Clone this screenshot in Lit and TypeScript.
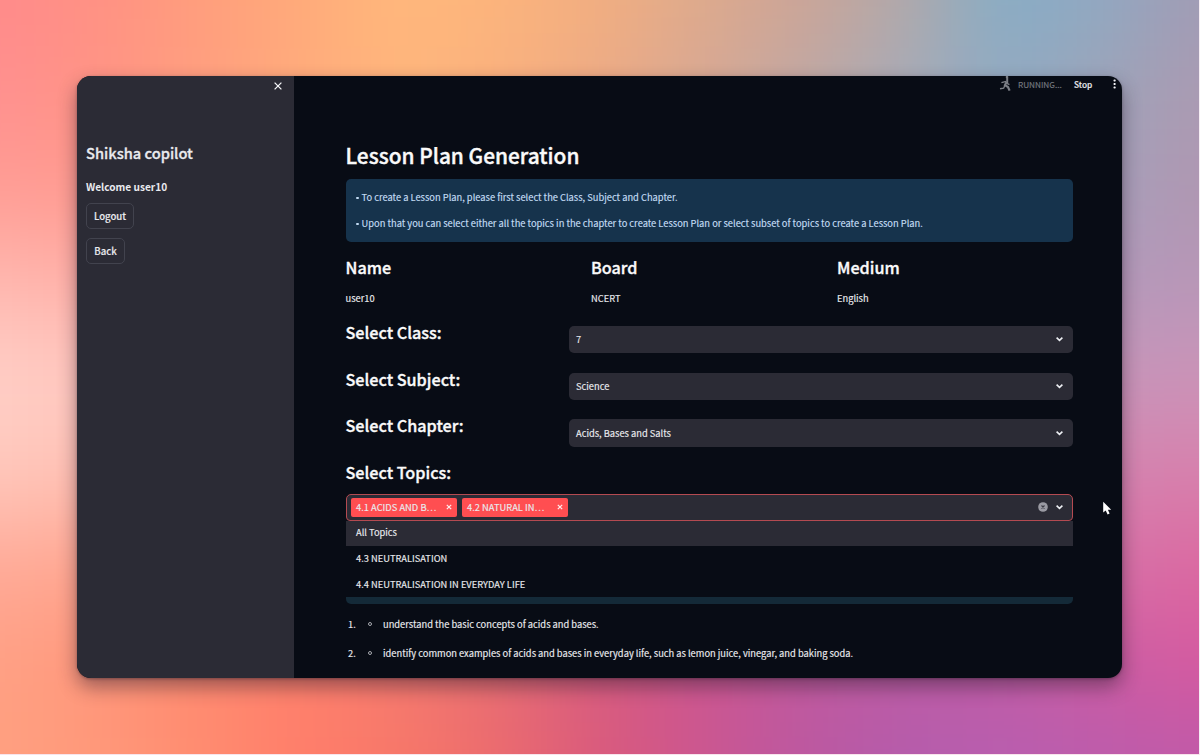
import { LitElement, html, css, svg } from "lit";
import { customElement } from "lit/decorators.js";

const COLS = 13;
const MESH: string[][] = [
  ["#ff8a8a","#ff9184","#ff9e7c","#ffaa7a","#ffb87c","#fcb47c","#f2ae80","#deaa8c","#cda496","#b3a8a8","#86adc6","#90a9c2","#a19bb4"],
  ["#ff9090","#ff9484","#ff9e80","#ffab7c","#ffb67c","#fab07e","#ecaa86","#d8a894","#c0a8a4","#a8abb8","#92aac2","#9da4b8","#ac9ab2"],
  ["#ff9c94","#ff9a90","#888","#888","#888","#888","#888","#888","#888","#888","#888","#a6a0bc","#b096b0"],
  ["#ffb8b0","#ffb0a8","#888","#888","#888","#888","#888","#888","#888","#888","#888","#b39aba","#b896b8"],
  ["#ffd0c8","#ffc8c0","#888","#888","#888","#888","#888","#888","#888","#888","#888","#c695ba","#cc94b8"],
  ["#ffc8bc","#ffc0b4","#888","#888","#888","#888","#888","#888","#888","#888","#888","#d484b0","#d880ac"],
  ["#ffaa98","#ffa690","#888","#888","#888","#888","#888","#888","#888","#888","#888","#d872a8","#dc68a0"],
  ["#ffa084","#ff967a","#ff8a70","#ff806c","#f47a70","#e66e74","#d65c80","#cc5690","#c05a9e","#be5ca4","#c05ca4","#cc5ca2","#d65aa0"],
  ["#ffa080","#ff987a","#ff8c70","#ff7e6a","#f87868","#ec6a6e","#da5a7c","#cc5690","#bc58a0","#b45cac","#b85eb0","#bc5cac","#c05aa8"],
];

@customElement("app-root")
export class AppRoot extends LitElement {
  static styles = css`
    :host { display: block; width: 1200px; height: 755px; position: relative; overflow: hidden;
      font-family: "Noto Sans CJK SC", "Noto Sans", sans-serif; color: #e9eaee; -webkit-text-stroke: .15px currentColor; }
    * { box-sizing: border-box; }
    .mesh { position: absolute; inset: 0; width: 1200px; height: 755px; }
    .stage { position: relative; height: 755px; padding: 76px 77px 76px 77px; border-right: 1px solid #f6eef4; border-bottom: 1px solid #f8e4ec; }
    .window { height: 602px; width: 1045px; display: flex; border-radius: 14px; overflow: hidden; background: #080c15;
      box-shadow: 0 9px 19px rgba(45,30,45,.48), 0 1px 3px rgba(30,20,30,.35); }
    .side { width: 217px; background: #2b2b35; padding: 0 9px; display: flex; flex-direction: column; align-items: flex-start; flex: none; }
    .close { align-self: flex-end; margin: 5px 2px 0 0; width: 10px; height: 10px; display: block; }
    .brand { margin-top: 51.4px; height: 22px; line-height: 22px; font-size: 14.65px; font-weight: 500; white-space: nowrap; -webkit-text-stroke-width: .3px; }
    .welcome { margin-top: 13.6px; height: 18px; line-height: 17px; font-size: 10.1px; font-weight: 700; white-space: nowrap; -webkit-text-stroke-width: 0; }
    .btn { height: 26px; line-height: 22px; border: 1px solid #42434e; border-radius: 5px; font: inherit; color: inherit; background: none; font-size: 9.6px; font-weight: 500; padding: 0; }
    .logout { margin-top: 7px; width: 48px; }
    .back { margin-top: 9px; width: 39px; }
    .main { flex: 1; padding: 0 49.5px 0 51.5px; display: flex; flex-direction: column; min-width: 0; }
    .bar { height: 18px; display: flex; justify-content: flex-end; align-items: center; margin-right: -44.5px; flex: none; padding-bottom: 2px; }
    .run { width: 13px; height: 18px; margin-right: 6px; }
    .running { color: #74777f; width: 44px; font-size: 8.2px; margin-right: 12px; white-space: nowrap; }
    .stop { width: 19px; font-size: 8.3px; font-weight: 500; margin-right: 19px; white-space: nowrap; }
    .dots { width: 5px; height: 14px; }
    h1 { margin: 45px 0 0; height: 32px; line-height: 32px; font-size: 20.85px; font-weight: 500; white-space: nowrap; color: #fafafa; -webkit-text-stroke-width: .4px; }
    .info { margin-top: 8.4px; height: 62.6px; flex: none; border-radius: 5px; background: #16334c; color: #c3dcf3; padding: 5px 10px; font-size: 9.32px; line-height: 26px; white-space: nowrap; }
    .info p { margin: 0; display: flex; align-items: center; }
    .info i { width: 2.4px; height: 2.4px; border-radius: 50%; background: #c3dcf3; margin: 1px 3px 0 .7px; }
    .facts { display: grid; grid-template-columns: 245.5px 246px 1fr; margin-top: 13.4px; height: 56px; flex: none; }
    h2 { margin: 0; font-size: 16.2px; font-weight: 500; line-height: 24px; white-space: nowrap; color: #fafafa; -webkit-text-stroke-width: .35px; }
    .facts p { margin: 9.4px 0 0; font-size: 9.3px; line-height: 18px; }
    .row { height: 46.8px; display: grid; grid-template-columns: 223px 1fr; flex: none; }
    .rows { margin-top: 8.4px; flex: none; }
    .select { margin-top: 6px; height: 27.2px; border-radius: 5px; background: #2b2b35; display: flex; align-items: center; padding: 0 9px 0 7.5px; font-size: 9.3px; }
    .select span { flex: 1; }
    .chev { width: 9px; height: 8px; display: block; }
    .multi { margin-top: 9.8px; height: 27px; flex: none; border: 1px solid #b44a51; border-radius: 5px 5px 4px 4px; background: #2b2b35; display: flex; align-items: center; padding: 0 8px 0 4px; }
    .tag { width: 106px; height: 19px; border-radius: 2px; background: #ff4e51; display: flex; align-items: center; justify-content: space-between; padding: 0 5px 1px 5.5px; margin-right: 5px; font-size: 9.35px; white-space: nowrap; }
    .tag svg { width: 6px; height: 6px; }
    .clear { width: 10px; height: 10px; margin: 0 7px 0 auto; }
    .menu { height: 75px; flex: none; font-size: 9.3px; line-height: 25px; }
    .menu div { padding-left: 10.5px; height: 26px; white-space: nowrap; }
    .menu .hot { background: #2b2b35; height: 25px; line-height: 23px; }
    .strip { height: 7px; flex: none; margin-top: 1px; background: #142a38; border-radius: 0 0 5px 5px; }
    ol { margin: 6px 0 0; padding: 0; list-style: none; font-size: 9.32px; flex: none; }
    li { height: 29px; line-height: 28px; display: flex; white-space: nowrap; }
    .num { width: 22px; padding-left: 2.5px; }
    .ring { width: 15.5px; display: flex; align-items: center; }
    .ring i { width: 4px; height: 4px; border: 1px solid #a6a9ae; border-radius: 50%; }
    .cursor { position: absolute; left: 1102px; top: 501px; width: 10px; height: 15px; }
  `;

  private chevron() {
    return html`<svg class="chev" viewBox="0 0 9 8"><path d="M1.6 2.6 4.5 5.3 7.4 2.6" fill="none" stroke="#eef0f4" stroke-width="1.6"/></svg>`;
  }

  private tag(label: string) {
    return html`<div class="tag"><span>${label}</span><svg viewBox="0 0 6 6"><path d="M.8.8 5.2 5.2M5.2.8.8 5.2" stroke="#ffecec" stroke-width="1.2"/></svg></div>`;
  }

  private mesh() {
    return html`<svg class="mesh" viewBox="0 0 1200 755">
      <defs><filter id="soft" filterUnits="userSpaceOnUse" x="-200" y="-200" width="1600" height="1155" color-interpolation-filters="sRGB"><feGaussianBlur stdDeviation="44"/></filter></defs>
      <g filter="url(#soft)">${MESH.map((r, j) => r.map((c, i) => {
        const x0 = i === 0 ? -200 : i * 100 - 50, x1 = i === COLS - 1 ? 1400 : i * 100 + 50;
        const y0 = j === 0 ? -200 : j * 94.4 - 47, y1 = j === 8 ? 955 : j * 94.4 + 47.4;
        let fill = c;
        if (c === "#888") fill = j === 2 ? MESH[1][i] : j === 6 ? MESH[7][i] : i < 6 ? r[1] : r[11];
        return svg`<rect x=${x0} y=${y0} width=${x1 - x0 + 1} height=${y1 - y0 + 1} fill=${fill}/>`;
      }))}</g></svg>`;
  }

  render() {
    const facts = [["Name", "user10"], ["Board", "NCERT"], ["Medium", "English"]];
    const rows = [["Select Class:", "7"], ["Select Subject:", "Science"], ["Select Chapter:", "Acids, Bases and Salts"]];
    const goals = ["understand the basic concepts of acids and bases.", "identify common examples of acids and bases in everyday life, such as lemon juice, vinegar, and baking soda."];
    return html`${this.mesh()}
      <div class="stage"><div class="window">
        <aside class="side">
          <svg class="close" viewBox="0 0 10 10"><path d="M1.6 1.6 8.4 8.4M8.4 1.6 1.6 8.4" stroke="#f2f3f6" stroke-width="1.3"/></svg>
          <div class="brand">Shiksha copilot</div>
          <div class="welcome">Welcome user10</div>
          <button class="btn logout">Logout</button>
          <button class="btn back">Back</button>
        </aside>
        <main class="main">
          <div class="bar">
            <svg class="run" viewBox="0 0 13 18"><g fill="none" stroke="#7c7f86"><path d="M8.2 2.5V8.2" stroke-width="2"/><path d="M7.6 7 6 10.2 9 12 10.6 15.6" stroke-width="2.2"/><path d="M6 10.2 4.6 13.2 1 13.8M2.4 7.6 7.2 6.4M8 8.4 10.4 9.6" stroke-width="1.4"/></g><circle cx="8" cy="2" r="1.3" fill="#7c7f86"/></svg>
            <span class="running">RUNNING...</span><span class="stop">Stop</span>
            <svg class="dots" viewBox="0 0 5 14"><g fill="#f2f3f6"><rect x="1.5" y="2.4" width="2.2" height="2.2" rx=".8"/><rect x="1.5" y="5.9" width="2.2" height="2.2" rx=".8"/><rect x="1.5" y="9.4" width="2.2" height="2.2" rx=".8"/></g></svg>
          </div>
          <h1>Lesson Plan Generation</h1>
          <div class="info"><p><i></i>To create a Lesson Plan, please first select the Class, Subject and Chapter.</p><p><i></i>Upon that you can select either all the topics in the chapter to create Lesson Plan or select subset of topics to create a Lesson Plan.</p></div>
          <div class="facts">${facts.map(f => html`<div><h2>${f[0]}</h2><p>${f[1]}</p></div>`)}</div>
          <div class="rows">${rows.map(r => html`<div class="row"><h2>${r[0]}</h2><div class="select"><span>${r[1]}</span>${this.chevron()}</div></div>`)}</div>
          <h2>Select Topics:</h2>
          <div class="multi">${this.tag("4.1 ACIDS AND B…")}${this.tag("4.2 NATURAL IN…")}
            <svg class="clear" viewBox="0 0 10 10"><circle cx="5" cy="5" r="4.8" fill="#9a9aa3"/><path d="M3.5 3.5 6.5 6.5M6.5 3.5 3.5 6.5" stroke="#3a3a44" stroke-width="1.1"/></svg>${this.chevron()}</div>
          <div class="menu"><div class="hot">All Topics</div><div>4.3 NEUTRALISATION</div><div>4.4 NEUTRALISATION IN EVERYDAY LIFE</div></div>
          <div class="strip"></div>
          <ol>${goals.map((g, i) => html`<li><span class="num">${i + 1}.</span><span class="ring"><i></i></span><span>${g}</span></li>`)}</ol>
        </main>
      </div></div>
      <svg class="cursor" viewBox="0 0 10 15"><path d="M1.2.8V11.6L3.7 9.4 5.6 13.4 7.6 12.4 5.9 8.7H9.2Z" fill="#fff"/></svg>`;
  }
}
